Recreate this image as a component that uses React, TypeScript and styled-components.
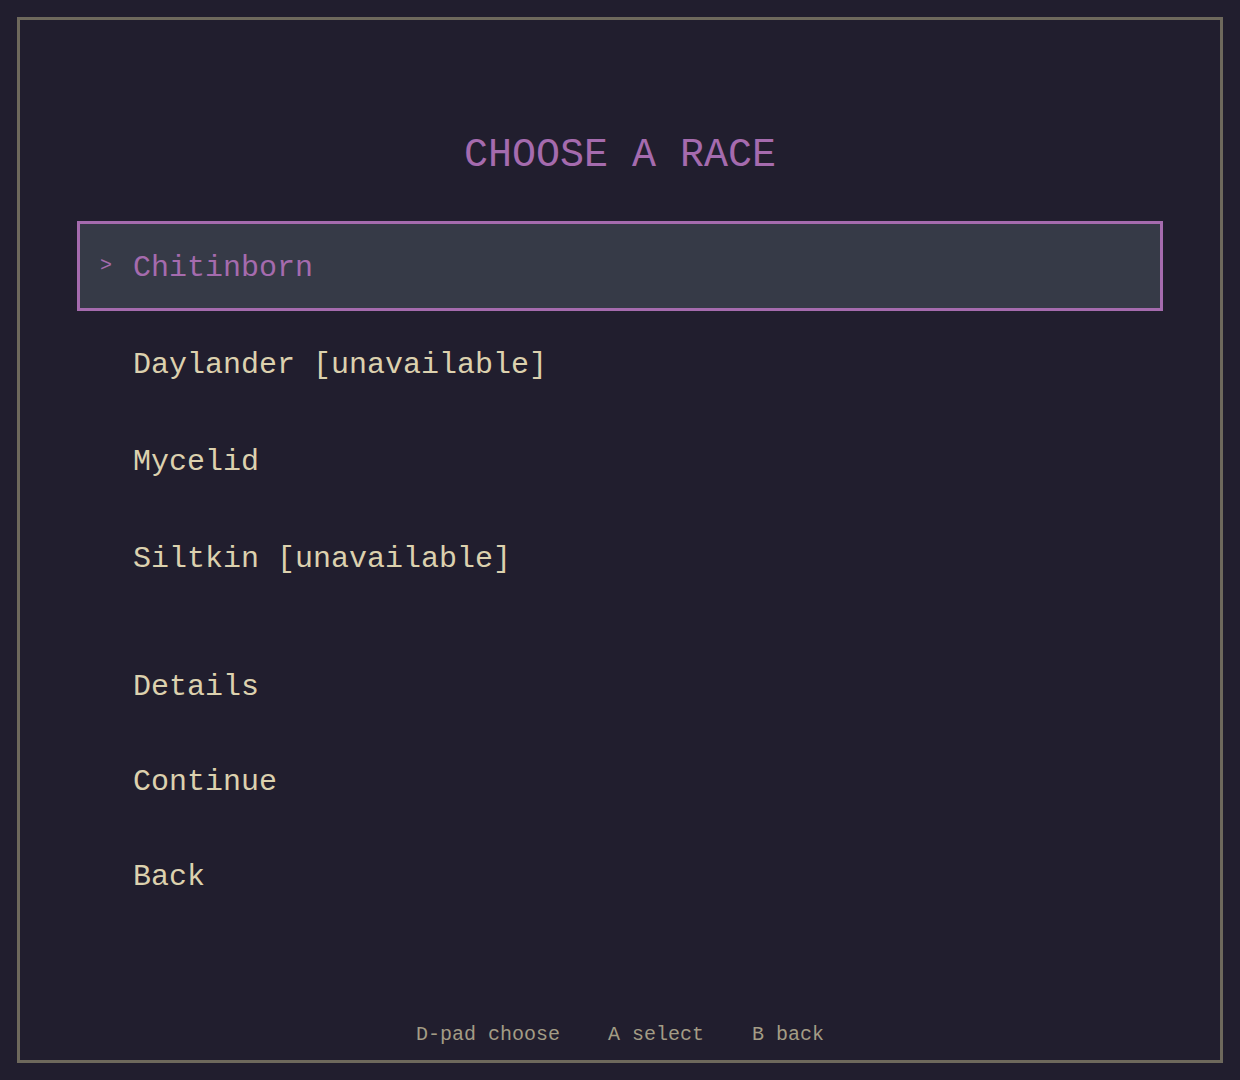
import React from "react";
import styled, { createGlobalStyle } from "styled-components";

type Option = {
  label: string;
  unavailable?: boolean;
};

const races: Option[] = [
  { label: "Chitinborn" },
  { label: "Daylander", unavailable: true },
  { label: "Mycelid" },
  { label: "Siltkin", unavailable: true },
];

const actions: Option[] = [{ label: "Details" }, { label: "Continue" }, { label: "Back" }];

const hints = ["D-pad choose", "A select", "B back"];

const App = () => {
  const selected = 0;

  return (
    <>
      <GlobalStyle />
      <Sframe>
        <Stitle>CHOOSE A RACE</Stitle>
        <Smenu>
          <Sgroup>
            {races.map((race, i) => (
              <Srow key={race.label} $active={i === selected}>
                <Scursor>{i === selected ? ">" : ""}</Scursor>
                <Slabel $active={i === selected}>
                  {race.label}
                  {race.unavailable && " [unavailable]"}
                </Slabel>
              </Srow>
            ))}
          </Sgroup>
          <Sgroup $gap={5}>
            {actions.map((a) => (
              <Srow key={a.label} $active={false}>
                <Scursor />
                <Slabel $active={false}>{a.label}</Slabel>
              </Srow>
            ))}
          </Sgroup>
        </Smenu>
        <Sfooter>
          {hints.map((h) => (
            <Shint key={h}>{h}</Shint>
          ))}
        </Sfooter>
      </Sframe>
    </>
  );
};

const GlobalStyle = createGlobalStyle`
  html, body {
    margin: 0;
    padding: 0;
    background: #211e2e;
  }
  body {
    font-family: "Liberation Mono", "DejaVu Sans Mono", monospace;
  }
`;

const Sframe = styled.div`
  box-sizing: border-box;
  margin: 17px;
  width: 1206px;
  height: 1046px;
  border: 3px solid #6e695c;
  display: flex;
  flex-direction: column;
  padding: 116px 57px 0;
`;

const Stitle = styled.h1`
  margin: 0;
  text-align: center;
  font-family: "Liberation Mono", monospace;
  font-weight: normal;
  font-size: 40px;
  line-height: 40px;
  color: #a56bae;
`;

const Smenu = styled.div`
  margin-top: 45px;
  display: flex;
  flex-direction: column;
  gap: 38px;
`;

const Sgroup = styled.div<{ $gap?: number }>`
  display: flex;
  flex-direction: column;
  gap: ${(p) => (p.$gap ?? 7)}px;
`;

const Srow = styled.div<{ $active: boolean }>`
  box-sizing: border-box;
  height: 90px;
  display: flex;
  align-items: center;
  padding-left: 20px;
  border: 3px solid ${(p) => (p.$active ? "#a56bae" : "transparent")};
  background: ${(p) => (p.$active ? "#363a47" : "transparent")};
`;

const Scursor = styled.span`
  width: 33px;
  flex-shrink: 0;
  font-size: 20px;
  line-height: 20px;
  color: #a56bae;
`;

const Slabel = styled.span<{ $active: boolean }>`
  font-size: 30px;
  line-height: 30px;
  padding-top: 3px;
  color: ${(p) => (p.$active ? "#a56bae" : "#dcd1ae")};
  white-space: pre;
`;

const Sfooter = styled.div`
  margin-top: auto;
  padding-bottom: 15px;
  display: flex;
  justify-content: center;
  gap: 48px;
`;

const Shint = styled.span`
  font-size: 20px;
  line-height: 20px;
  color: #a39c85;
  white-space: pre;
`;

export default App;
